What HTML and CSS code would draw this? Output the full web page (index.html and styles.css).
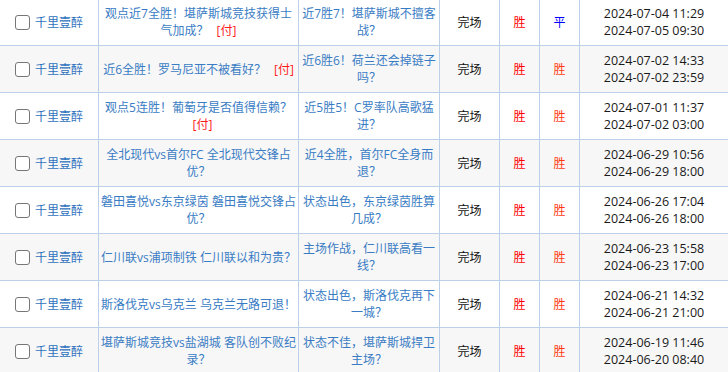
FILE: index.html
```html
<!DOCTYPE html>
<html lang="zh-CN">
<head>
<meta charset="utf-8">
<title>推荐列表</title>
<link rel="stylesheet" href="styles.css">
</head>
<body>
<div class="list">
  <div class="row">
    <div class="c c-user"><span class="box"></span><a class="name">千里壹醉</a></div>
    <div class="c c-title"><a class="lnk">观点近7全胜！堪萨斯城竞技获得士气加成？<span class="pay">[付]</span></a></div>
    <div class="c c-sub"><a class="lnk">近7胜7！堪萨斯城不擅客战？</a></div>
    <div class="c c-st">完场</div>
    <div class="c c-r"><span class="win">胜</span></div>
    <div class="c c-r"><span class="draw">平</span></div>
    <div class="c c-date">2024-07-04 11:29<br>2024-07-05 09:30</div>
  </div>
  <div class="row alt">
    <div class="c c-user"><span class="box"></span><a class="name">千里壹醉</a></div>
    <div class="c c-title"><a class="lnk">近6全胜！罗马尼亚不被看好？<span class="pay">[付]</span></a></div>
    <div class="c c-sub"><a class="lnk">近6胜6！荷兰还会掉链子吗？</a></div>
    <div class="c c-st">完场</div>
    <div class="c c-r"><span class="win">胜</span></div>
    <div class="c c-r"><span class="win2">胜</span></div>
    <div class="c c-date">2024-07-02 14:33<br>2024-07-02 23:59</div>
  </div>
  <div class="row">
    <div class="c c-user"><span class="box"></span><a class="name">千里壹醉</a></div>
    <div class="c c-title"><a class="lnk">观点5连胜！葡萄牙是否值得信赖？<span class="pay">[付]</span></a></div>
    <div class="c c-sub"><a class="lnk">近5胜5！C罗率队高歌猛进？</a></div>
    <div class="c c-st">完场</div>
    <div class="c c-r"><span class="win">胜</span></div>
    <div class="c c-r"><span class="win2">胜</span></div>
    <div class="c c-date">2024-07-01 11:37<br>2024-07-02 03:00</div>
  </div>
  <div class="row alt">
    <div class="c c-user"><span class="box"></span><a class="name">千里壹醉</a></div>
    <div class="c c-title"><a class="lnk">全北现代vs首尔FC 全北现代交锋占优？</a></div>
    <div class="c c-sub"><a class="lnk">近4全胜，首尔FC全身而退？</a></div>
    <div class="c c-st">完场</div>
    <div class="c c-r"><span class="win">胜</span></div>
    <div class="c c-r"><span class="win2">胜</span></div>
    <div class="c c-date">2024-06-29 10:56<br>2024-06-29 18:00</div>
  </div>
  <div class="row">
    <div class="c c-user"><span class="box"></span><a class="name">千里壹醉</a></div>
    <div class="c c-title"><a class="lnk">磐田喜悦vs东京绿茵 磐田喜悦交锋占优？</a></div>
    <div class="c c-sub"><a class="lnk">状态出色，东京绿茵胜算几成？</a></div>
    <div class="c c-st">完场</div>
    <div class="c c-r"><span class="win">胜</span></div>
    <div class="c c-r"><span class="win2">胜</span></div>
    <div class="c c-date">2024-06-26 17:04<br>2024-06-26 18:00</div>
  </div>
  <div class="row alt">
    <div class="c c-user"><span class="box"></span><a class="name">千里壹醉</a></div>
    <div class="c c-title"><a class="lnk">仁川联vs浦项制铁 仁川联以和为贵？</a></div>
    <div class="c c-sub"><a class="lnk">主场作战，仁川联高看一线？</a></div>
    <div class="c c-st">完场</div>
    <div class="c c-r"><span class="win">胜</span></div>
    <div class="c c-r"><span class="win2">胜</span></div>
    <div class="c c-date">2024-06-23 15:58<br>2024-06-23 17:00</div>
  </div>
  <div class="row">
    <div class="c c-user"><span class="box"></span><a class="name">千里壹醉</a></div>
    <div class="c c-title"><a class="lnk">斯洛伐克vs乌克兰 乌克兰无路可退！</a></div>
    <div class="c c-sub"><a class="lnk">状态出色，斯洛伐克再下一城？</a></div>
    <div class="c c-st">完场</div>
    <div class="c c-r"><span class="win">胜</span></div>
    <div class="c c-r"><span class="win2">胜</span></div>
    <div class="c c-date">2024-06-21 14:32<br>2024-06-21 21:00</div>
  </div>
  <div class="row alt">
    <div class="c c-user"><span class="box"></span><a class="name">千里壹醉</a></div>
    <div class="c c-title"><a class="lnk">堪萨斯城竞技vs盐湖城 客队创不败纪录？</a></div>
    <div class="c c-sub"><a class="lnk">状态不佳，堪萨斯城捍卫主场？</a></div>
    <div class="c c-st">完场</div>
    <div class="c c-r"><span class="win">胜</span></div>
    <div class="c c-r"><span class="win2">胜</span></div>
    <div class="c c-date">2024-06-19 11:46<br>2024-06-20 08:40</div>
  </div>
</div>
</body>
</html>
```
FILE: styles.css
```css
html, body {
  margin: 0;
  padding: 0;
  background: #ffffff;
}
body {
  font-family: "Open Sans", "Noto Sans CJK SC", sans-serif;
  font-size: 12px;
  color: #222222;
  overflow: hidden;
}
.list {
  margin-top: -1px;
  width: 728px;
}
.row {
  display: grid;
  grid-template-columns: 99px 200px 141px 60px 40px 40px 148px;
  height: 47px;
  background: #ffffff;
}
.row.alt {
  background: #f7f7f7;
}
.c {
  box-sizing: border-box;
  border-right: 1px solid #bcd0ea;
  border-bottom: 1px solid #bcd0ea;
  display: flex;
  align-items: center;
  justify-content: center;
  text-align: center;
  line-height: 17px;
}
.c-user {
  gap: 5px;
}
.box {
  width: 13px;
  height: 13px;
  border: 1px solid #767676;
  border-radius: 3px;
  background: #ffffff;
  flex: none;
}
.name {
  color: #2f72bd;
  font-size: 12px;
}
.c-title {
  padding: 0 2px;
}
.c-sub {
  padding: 0 3px;
}
.lnk {
  color: #3a7cc4;
}
.pay {
  display: inline-block;
  color: #ff1a1a;
  margin-left: 8px;
}
.c-st {
  color: #111111;
}
.win {
  color: #ff0000;
}
.win2 {
  color: #ff3a10;
}
.draw {
  color: #0000ff;
}
.c-date {
  border-right: none;
  font-size: 12.5px;
  color: #1a1a1a;
  line-height: 17px;
}
```
